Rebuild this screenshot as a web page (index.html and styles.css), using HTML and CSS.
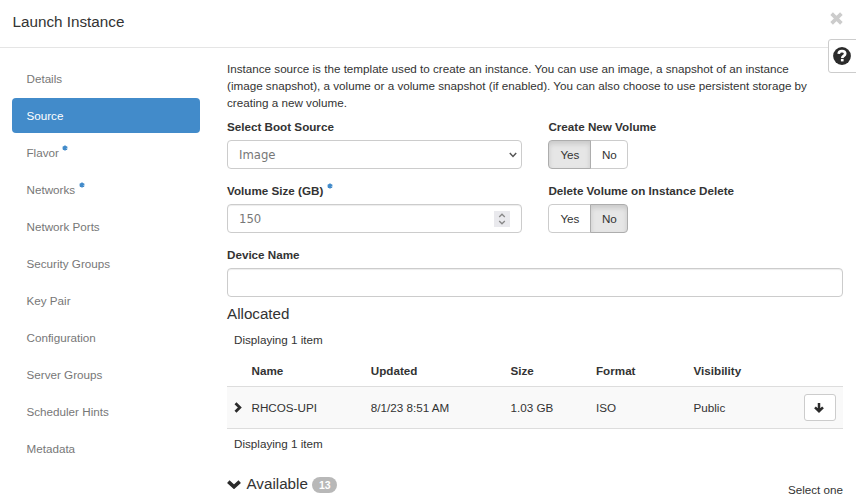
FILE: index.html
```html
<!DOCTYPE html>
<html lang="en">
<head>
<meta charset="utf-8">
<title>Launch Instance</title>
<link rel="stylesheet" href="styles.css">
</head>
<body>
<div class="modal">
  <header class="modal-header">
    <h1 class="title">Launch Instance</h1>
    <svg class="close" viewBox="0 0 12 12"><path d="M1.500 1.500L10.500 10.500M10.500 1.500L1.500 10.500"/></svg>
  </header>
  <button class="help" aria-label="Help">
    <svg viewBox="0 0 18 18"><circle cx="9" cy="9" r="8.9" fill="#2b2b2b"/><path d="M5.700 6.900C5.800 5 7.200 4.200 9 4.200c1.900 0 3.200 1 3.200 2.500 0 2.100-2.900 2.200-2.900 4.200" fill="none" stroke="#fff" stroke-width="2.700"/><path d="M7.900 11.900h2.700v2.500H7.900z" fill="#fff"/></svg>
  </button>
  <div class="modal-body">
    <nav class="steps">
      <a class="step">Details</a>
      <a class="step active">Source</a>
      <a class="step">Flavor<svg class="req" viewBox="0 0 6 6"><path d="M3 .4V5.600M.7 1.700L5.300 4.300M5.300 1.700L.7 4.300"/></svg></a>
      <a class="step">Networks<svg class="req" viewBox="0 0 6 6"><path d="M3 .4V5.600M.7 1.700L5.300 4.300M5.300 1.700L.7 4.300"/></svg></a>
      <a class="step">Network Ports</a>
      <a class="step">Security Groups</a>
      <a class="step">Key Pair</a>
      <a class="step">Configuration</a>
      <a class="step">Server Groups</a>
      <a class="step">Scheduler Hints</a>
      <a class="step">Metadata</a>
    </nav>
    <main class="content">
      <p class="intro">Instance source is the template used to create an instance. You can use an image, a snapshot of an instance<br>(image snapshot), a volume or a volume snapshot (if enabled). You can also choose to use persistent storage by<br>creating a new volume.</p>
      <div class="form">
        <div class="field">
          <div class="label">Select Boot Source</div>
          <div class="control select"><span>Image</span><svg class="caret" viewBox="0 0 8 6"><path d="M.8 1L4 4.400L7.200 1"/></svg></div>
        </div>
        <div class="field">
          <div class="label">Create New Volume</div>
          <div class="toggle"><span class="opt yes on">Yes</span><span class="opt no">No</span></div>
        </div>
        <div class="field">
          <div class="label">Volume Size (GB)<svg class="req" viewBox="0 0 6 6"><path d="M3 .4V5.600M.7 1.700L5.300 4.300M5.300 1.700L.7 4.300"/></svg></div>
          <div class="control number"><span>150</span><svg class="spinner" viewBox="0 0 16 16"><path d="M5.200 6L8 3.200L10.800 6M5.200 10L8 12.800L10.800 10"/></svg></div>
        </div>
        <div class="field">
          <div class="label">Delete Volume on Instance Delete</div>
          <div class="toggle"><span class="opt yes">Yes</span><span class="opt no on">No</span></div>
        </div>
        <div class="field wide">
          <div class="label">Device Name</div>
          <div class="control"></div>
        </div>
      </div>
      <h2 class="section">Allocated</h2>
      <div class="count">Displaying 1 item</div>
      <div class="row head"><span></span><span>Name</span><span>Updated</span><span>Size</span><span>Format</span><span>Visibility</span><span></span></div>
      <div class="row item">
        <svg class="expand" viewBox="0 0 8 11"><path d="M1.500 1.200L5.800 5.500L1.500 9.800"/></svg>
        <span>RHCOS-UPI</span><span>8/1/23 8:51 AM</span><span>1.03 GB</span><span>ISO</span><span>Public</span>
        <button class="move" aria-label="Remove"><svg viewBox="0 0 10 10"><path d="M5 0V8M1 4.300L5 8.200L9 4.300"/></svg></button>
      </div>
      <div class="count after">Displaying 1 item</div>
      <div class="available">
        <svg class="chev" viewBox="0 0 14 9"><path d="M1.300 1.600L7 6.800L12.700 1.600"/></svg>
        <h2 class="section">Available</h2>
        <span class="badge">13</span>
        <span class="hint">Select one</span>
      </div>
    </main>
  </div>
</div>
</body>
</html>
```

FILE: styles.css
```css
* { box-sizing: border-box; }
body {
  margin: 0;
  background: #fff;
  color: #333;
  font: 11.66px/17px "Liberation Sans", Arial, sans-serif;
}
svg { fill: none; flex: none; }
.modal { position: relative; height: 504px; overflow: hidden; }
.modal-header {
  display: flex;
  justify-content: space-between;
  align-items: flex-start;
  height: 48px;
  padding: 12px 13px 0 12.5px;
  border-bottom: 1px solid #e5e5e5;
}
.title { margin: 0; font-size: 15.25px; font-weight: 400; line-height: 20px; }
.close { width: 13px; height: 13px; stroke: #ccc; stroke-width: 3.4; }
.help {
  position: absolute;
  top: 39px;
  right: -1px;
  display: flex;
  width: 29px;
  height: 34px;
  padding: 7px 4px;
  border: 1px solid #ccc;
  border-radius: 3px 0 0 3px;
  background: #fff;
}
.help svg { width: 18px; height: 18px; }
.modal-body { display: flex; padding: 13px 13px 0 12px; }
.steps { display: flex; flex-direction: column; gap: 2px; width: 188px; margin-right: 27px; }
.step { height: 35px; padding: 0 14.5px; border-radius: 4px; color: #777; line-height: 36px; }
.step.active { background: #428bca; color: #fff; }
.req { width: 6px; height: 6px; margin-left: 3.5px; vertical-align: 6px; stroke: #428bca; stroke-width: 1.6; }
.content { width: 616px; }
.intro { margin: -1px 0 0; white-space: nowrap; }
.form { display: grid; grid-template-columns: 295px 295px; column-gap: 26.4px; row-gap: 14px; margin-top: 7px; }
.wide { grid-column: 1 / -1; width: 616px; }
.field { height: 50px; }
.label { height: 22px; font-weight: 700; white-space: nowrap; }
.control {
  display: flex;
  align-items: center;
  justify-content: space-between;
  height: 29px;
  padding: 0 11px;
  border: 1px solid #ccc;
  border-radius: 4px;
  box-shadow: inset 0 1px 1px rgba(0,0,0,.075);
  color: #777;
  font-family: "DejaVu Sans", sans-serif;
}
.control span { padding-top: 2px; }
.select { padding-right: 4px; box-shadow: none; }
.caret { width: 8px; height: 6px; stroke: #555; stroke-width: 1.5; }
.spinner { width: 16px; height: 16px; background: #e9e9ed; stroke: #888; stroke-width: 1.3; }
.toggle { display: flex; height: 29px; }
.opt { border: 1px solid #ccc; line-height: 27px; text-align: center; }
.yes { width: 43px; border-radius: 4px 0 0 4px; }
.no { width: 38px; margin-left: -1px; border-radius: 0 4px 4px 0; }
.on { position: relative; border-color: #adadad; background: #e6e6e6; box-shadow: inset 0 3px 5px rgba(0,0,0,.125); }
.section { margin: 0; font-size: 15.2px; font-weight: 400; line-height: 20px; }
.form + .section { margin-top: 8px; }
.count { margin: 7px 0 0 7px; }
.row {
  display: grid;
  grid-template-columns: 17.5px 119.300px 139.700px 85.500px 97.500px 110.500px 32px;
  align-items: center;
  padding: 0 7px;
}
.head { height: 38px; padding-top: 6px; font-weight: 700; }
.item { height: 43px; border: solid #ddd; border-width: 1px 0; background: #f9f9f9; }
.expand { width: 8px; height: 11px; stroke: #2b2b2b; stroke-width: 2.8; }
.move {
  display: flex;
  align-items: center;
  justify-content: center;
  width: 32px;
  height: 27px;
  padding: 1px 2px 0 0;
  border: 1px solid #ccc;
  border-radius: 3px;
  background: #fff;
}
.move svg { width: 10px; height: 10px; stroke: #2b2b2b; stroke-width: 2.5; }
.after { margin-top: 6px; }
.available { display: flex; align-items: center; height: 26px; margin-top: 19px; }
.chev { width: 14px; height: 9px; margin-right: 5.5px; stroke: #2b2b2b; stroke-width: 3.6; }
.badge {
  width: 25px;
  height: 16px;
  margin: 2px 0 0 4.5px;
  border-radius: 8px;
  background: #b8b8b8;
  color: #fff;
  font-size: 10.5px;
  font-weight: 700;
  line-height: 16px;
  text-align: center;
}
.hint { margin: 10px 0 0 auto; }
```
